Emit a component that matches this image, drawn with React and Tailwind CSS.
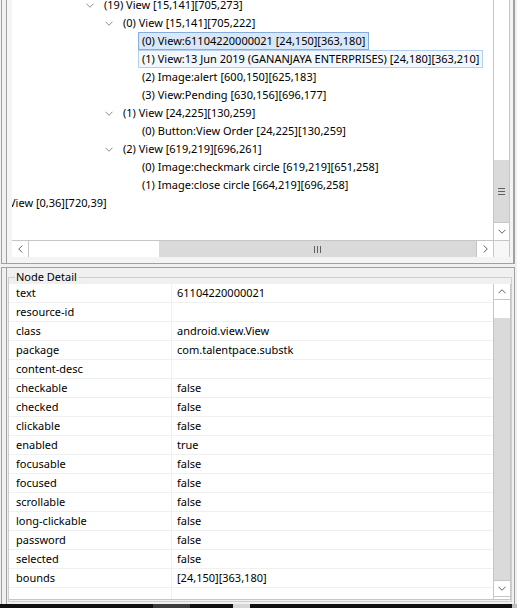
import React from "react";

const treeRows = [
  { indent: "w-[70px]", arrow: true, text: "(19) View [15,141][705,273]" },
  { indent: "w-[89px]", arrow: true, text: "(0) View [15,141][705,222]" },
  {
    indent: "w-[126px]",
    text: "(0) View:61104220000021 [24,150][363,180]",
    box: "border-[#84acdd] bg-[#d9e8f8]",
  },
  {
    indent: "w-[126px]",
    text: "(1) View:13 Jun 2019 (GANANJAYA ENTERPRISES) [24,180][363,210]",
    box: "border-[#b3d0ef] bg-[#f1f7fd]",
  },
  { indent: "w-[126px]", text: "(2) Image:alert [600,150][625,183]" },
  { indent: "w-[126px]", text: "(3) View:Pending [630,156][696,177]" },
  { indent: "w-[89px]", arrow: true, text: "(1) View [24,225][130,259]" },
  { indent: "w-[126px]", text: "(0) Button:View Order [24,225][130,259]" },
  { indent: "w-[89px]", arrow: true, text: "(2) View [619,219][696,261]" },
  { indent: "w-[126px]", text: "(0) Image:checkmark circle [619,219][651,258]" },
  { indent: "w-[126px]", text: "(1) Image:close circle [664,219][696,258]" },
  { indent: "w-0 -ml-[7px]", text: "View [0,36][720,39]" },
];

const details = [
  ["text", "61104220000021"],
  ["resource-id", ""],
  ["class", "android.view.View"],
  ["package", "com.talentpace.substk"],
  ["content-desc", ""],
  ["checkable", "false"],
  ["checked", "false"],
  ["clickable", "false"],
  ["enabled", "true"],
  ["focusable", "false"],
  ["focused", "false"],
  ["scrollable", "false"],
  ["long-clickable", "false"],
  ["password", "false"],
  ["selected", "false"],
  ["bounds", "[24,150][363,180]"],
  ["", ""],
];

const chevronPoints = {
  down: "0.5,0.5 4,4 7.5,0.5",
  up: "0.5,4 4,0.5 7.5,4",
  left: "4,0.5 0.5,4 4,7.5",
  right: "0.5,0.5 4,4 0.5,7.5",
};

function Chevron({ dir, color = "#606060" }) {
  const vertical = dir === "up" || dir === "down";
  return (
    <svg
      width={vertical ? 8 : 5}
      height={vertical ? 5 : 8}
      viewBox={vertical ? "0 0 8 4.5" : "0 0 4.5 8"}
      className="block"
    >
      <polyline points={chevronPoints[dir]} fill="none" stroke={color} strokeWidth="1" />
    </svg>
  );
}

function TreeRow({ row }) {
  return (
    <div className="h-[18px] flex items-center whitespace-nowrap">
      <div className={`${row.indent} shrink-0`} />
      {row.arrow ? (
        <>
          <div className="w-[16px] flex justify-center shrink-0">
            <Chevron dir="down" color="#8c8c8c" />
          </div>
          <span className="ml-[6px]">{row.text}</span>
        </>
      ) : (
        <span
          className={`h-[18px] flex items-center px-[3px] border ${
            row.box ? row.box : "border-transparent"
          }`}
        >
          {row.text}
        </span>
      )}
    </div>
  );
}

function TreeBox() {
  return (
    <div className="h-[257px] bg-white flex flex-col">
      <div className="flex-1 flex min-h-0">
        <div className="flex-1 overflow-hidden">
          <div className="-mt-[4px]">
            {treeRows.map((row, i) => (
              <TreeRow key={i} row={row} />
            ))}
          </div>
        </div>
        <div className="w-[17px] shrink-0 flex flex-col border-l border-r border-[#c6c6c6]">
          <div className="flex-1 bg-white" />
          <div className="h-[62px] bg-[#dadada] flex flex-col items-center justify-center gap-[2px]">
            <div className="w-[7px] h-px bg-[#606060]" />
            <div className="w-[7px] h-px bg-[#606060]" />
            <div className="w-[7px] h-px bg-[#606060]" />
          </div>
          <div className="h-[18px] border-t border-[#c6c6c6] flex items-center justify-center">
            <Chevron dir="down" />
          </div>
        </div>
      </div>
      <div className="h-[17px] shrink-0 flex border-t border-[#c6c6c6]">
        <div className="w-[17px] border-r border-[#c6c6c6] flex items-center justify-center">
          <Chevron dir="left" />
        </div>
        <div className="w-[130px] bg-white" />
        <div className="flex-1 bg-[#dadada] flex items-center justify-center gap-[2px]">
          <div className="w-px h-[7px] bg-[#606060]" />
          <div className="w-px h-[7px] bg-[#606060]" />
          <div className="w-px h-[7px] bg-[#606060]" />
        </div>
        <div className="w-[17px] border-l border-[#c6c6c6] flex items-center justify-center">
          <Chevron dir="right" />
        </div>
        <div className="w-[17px] border-l border-r border-[#c6c6c6] bg-[#f7f7f7]" />
      </div>
    </div>
  );
}

function DetailTable() {
  return (
    <div className="h-[316px] flex bg-white border-b border-r border-[#c6c6c6]">
      <div className="flex-1 overflow-hidden">
        {details.map(([k, v], i) => (
          <div key={i} className="h-[19px] flex border-b border-[#f0f0f0] whitespace-nowrap">
            <div className="w-[163px] shrink-0 border-r border-[#f0f0f0] pl-[7px] flex items-center">
              {k}
            </div>
            <div className="flex-1 pl-[5px] flex items-center">{v}</div>
          </div>
        ))}
      </div>
      <div className="w-[17px] shrink-0 flex flex-col border-l border-[#c6c6c6]">
        <div className="h-[16px] border-b border-[#c6c6c6] flex items-center justify-center">
          <Chevron dir="up" />
        </div>
        <div className="h-[18px] bg-white" />
        <div className="flex-1 bg-[#dadada]" />
        <div className="h-[17px] border-t border-b border-[#c6c6c6] flex items-center justify-center">
          <Chevron dir="down" />
        </div>
        <div className="h-[2px] bg-white" />
      </div>
    </div>
  );
}

export default function App() {
  return (
    <div className="w-[517px] h-[608px] bg-[#f0f0f0] flex flex-col overflow-hidden text-[11px] text-black font-['Noto_Sans',sans-serif]">
      {/* hierarchy tree */}
      <div className="h-[264px] shrink-0 pl-px pr-[2px]">
        <div className="h-full border-l border-r border-b border-[#a0a0a0] pl-[4px]">
          <div className="h-full border-l border-r border-[#a0a0a0] pl-[5px] pr-[3px] bg-[#f4f4f4]">
            <TreeBox />
          </div>
        </div>
      </div>

      <div className="h-[3px] shrink-0" />

      {/* node detail */}
      <div className="h-[337px] shrink-0 pl-px pr-[2px]">
        <div className="h-full border-l border-t border-r border-[#a0a0a0] pl-[4px]">
          <div className="h-full border-l border-[#a0a0a0] pl-px pr-[2px] pt-[2px]">
            <fieldset className="border border-[#cfcfcf] pb-px">
              <legend className="ml-[6px] px-px leading-[14px]">Node Detail</legend>
              <DetailTable />
            </fieldset>
          </div>
        </div>
      </div>

      {/* taskbar strip */}
      <div className="h-[4px] shrink-0 bg-[#101010] flex">
        <div className="w-[153px]" />
        <div className="w-[37px] bg-[#3c3c3c]" />
        <div className="w-[43px]" />
        <div className="w-[17px] bg-[#d6d6d6]" />
        <div className="flex-1" />
        <div className="w-[5px] bg-[#bdbdbd]" />
      </div>
    </div>
  );
}
